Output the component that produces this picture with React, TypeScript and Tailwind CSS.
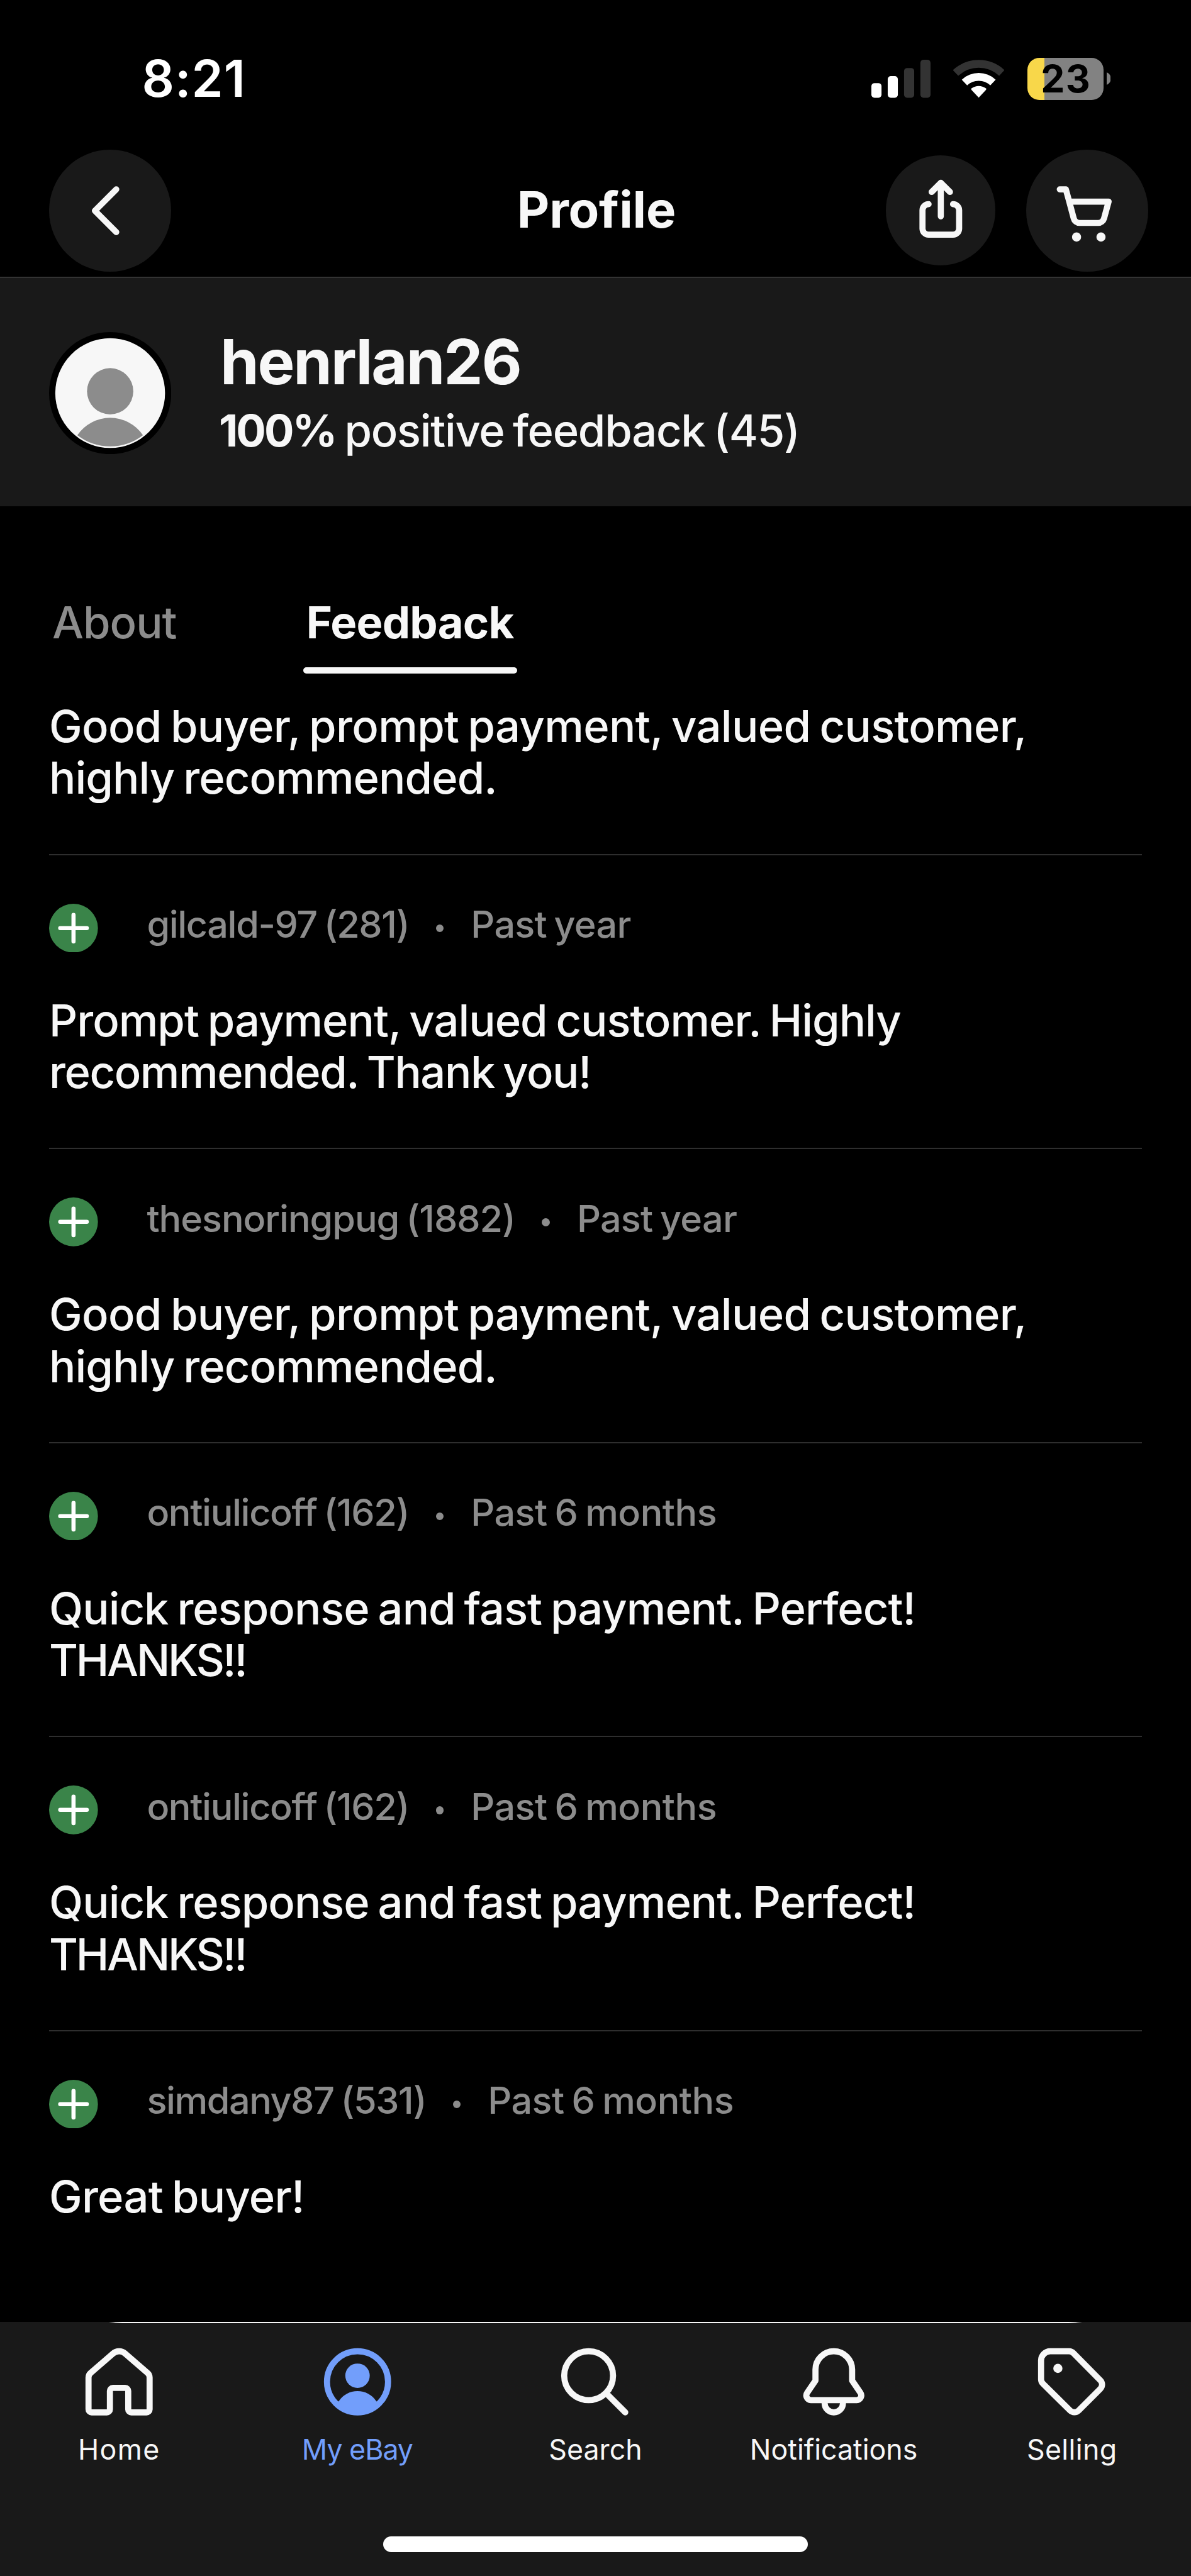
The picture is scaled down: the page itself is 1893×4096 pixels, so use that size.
import type { ReactNode } from "react";

type Line = { text: string; tracking: string };
type Feedback = {
  user: Line;
  period: Line;
  lines: Line[];
};

const goodBuyer: Line[] = [
  { text: "Good buyer, prompt payment, valued customer,", tracking: "tracking-[-0.67px]" },
  { text: "highly recommended.", tracking: "tracking-[-0.93px]" },
];

const quickResponse: Line[] = [
  { text: "Quick response and fast payment. Perfect!", tracking: "tracking-[-0.98px]" },
  { text: "THANKS!!", tracking: "tracking-[-3.2px]" },
];

const pastYear: Line = { text: "Past year", tracking: "tracking-[-0.73px]" };
const pastSixMonths: Line = { text: "Past 6 months", tracking: "tracking-[-0.5px]" };

const entries: Feedback[] = [
  {
    user: { text: "gilcald-97 (281)", tracking: "tracking-[-1.38px]" },
    period: pastYear,
    lines: [
      { text: "Prompt payment, valued customer. Highly", tracking: "tracking-[-1px]" },
      { text: "recommended. Thank you!", tracking: "tracking-[-1.45px]" },
    ],
  },
  {
    user: { text: "thesnoringpug (1882)", tracking: "tracking-[-1.03px]" },
    period: pastYear,
    lines: goodBuyer,
  },
  {
    user: { text: "ontiulicoff (162)", tracking: "tracking-[-1.33px]" },
    period: pastSixMonths,
    lines: quickResponse,
  },
  {
    user: { text: "ontiulicoff (162)", tracking: "tracking-[-1.33px]" },
    period: pastSixMonths,
    lines: quickResponse,
  },
  {
    user: { text: "simdany87 (531)", tracking: "tracking-[-1.4px]" },
    period: pastSixMonths,
    lines: [{ text: "Great buyer!", tracking: "tracking-[-0.77px]" }],
  },
];

function StatusBar() {
  return (
    <div className="flex h-[237.6px] items-center pt-[13.4px] pl-[225.4px] text-white">
      <span className="w-[1159.6px] text-[80.5px] leading-[96px] font-semibold tracking-[1px]">8:21</span>
      <svg className="h-[60.5px] w-[94px] shrink-0" viewBox="44 80 286 184" preserveAspectRatio="none">
        <rect x="44" y="193" width="49" height="71" rx="15" fill="#fff" />
        <rect x="123" y="159" width="49" height="105" rx="15" fill="#fff" />
        <rect x="202" y="120" width="49" height="144" rx="15" fill="#333" />
        <rect x="281" y="80" width="49" height="184" rx="15" fill="#333" />
      </svg>
      <svg className="ml-[36.1px] h-[60.5px] w-[81.2px] shrink-0" viewBox="440 80 247 184" fill="none">
        <path d="M451.7 144a164 164 0 0 1 223.6 0" stroke="#333" strokeWidth="38" />
        <path d="M494.6 190.1a101 101 0 0 1 137.8 0" stroke="#fff" strokeWidth="38" />
        <path d="M563.5 263 528 225.5q-3-4 2-8a57 57 0 0 1 67 0q5 4 2 8z" fill="#fff" />
      </svg>
      <div className="ml-[36.4px] flex h-[66.4px] w-[121.3px] shrink-0 items-center justify-center rounded-[19px] bg-[linear-gradient(to_right,#f8d74a_27.4px,#828282_27.4px)] text-[60.5px] leading-[66px] font-bold text-black">
        <span className="pl-[2px] tracking-[1.5px]">23</span>
      </div>
      <svg className="ml-[4.9px] h-[20px] w-[6.6px] shrink-0" viewBox="0 0 20 61" preserveAspectRatio="none">
        <path d="M0 0q20 9 20 30.5T0 61z" fill="#828282" />
      </svg>
    </div>
  );
}

function NavigationBar() {
  return (
    <div className="grid h-[194.2px] grid-cols-[1fr_auto_1fr] items-center text-[#f7f7f7]">
      <div className="pl-[77.7px]">
        <button className="flex size-[194.2px] rounded-full bg-[#191919]">
          <svg className="size-full" viewBox="0 0 40 40" fill="none" stroke="currentColor" strokeWidth="2" strokeLinecap="round" strokeLinejoin="round">
            <path d="m22 13-7 7 7 7" />
          </svg>
        </button>
      </div>
      <h1 className="pb-[3px] pl-[3px] text-[79.6px] leading-[96px] font-bold tracking-[-0.2px]">Profile</h1>
      <div className="flex items-center justify-end gap-[48.6px] pr-[68px]">
        <button className="flex size-[174.7px] rounded-full bg-[#191919]">
          <svg className="size-full" viewBox="0 0 36 36" fill="none" stroke="currentColor" strokeWidth="2" strokeLinecap="round" strokeLinejoin="round">
            <path d="M18 20V9.2M15 12l3-3 3 3" />
            <path d="M14 16a2 2 0 0 0-2 2v6a2 2 0 0 0 2 2h8a2 2 0 0 0 2-2v-6a2 2 0 0 0-2-2" />
          </svg>
        </button>
        <button className="flex size-[194.2px] rounded-full bg-[#191919]">
          <svg className="size-full" viewBox="0 0 40 40" fill="none" stroke="currentColor" strokeWidth="2" strokeLinecap="round" strokeLinejoin="round">
            <path d="M11 13h2l1.1 4H27l-1.5 5.5a2 2 0 0 1-1.95 1.5H17.5a2 2 0 0 1-1.93-1.5L14.1 17" />
            <circle cx="16.5" cy="28.6" r="1.5" fill="currentColor" stroke="none" />
            <circle cx="24.5" cy="28.6" r="1.5" fill="currentColor" stroke="none" />
          </svg>
        </button>
      </div>
    </div>
  );
}

function Avatar() {
  return (
    <svg className="size-[194.2px] shrink-0" viewBox="-98.5 -98.5 197 197">
      <circle r="98.5" fill="#000" />
      <circle r="88.5" fill="#f7f7f7" />
      <circle cy="-3" r="37.3" fill="#8c8c8c" />
      <path d="M-52.9 67.8a64 64 0 0 1 105.8 0A86 86 0 0 1-52.9 67.8z" fill="#8c8c8c" />
    </svg>
  );
}

function ProfileHeader() {
  return (
    <section className="flex h-[365.3px] border-t-2 border-[#333] bg-[#191919] pl-[77.7px] text-[#f7f7f7]">
      <div className="pt-[86px]">
        <Avatar />
      </div>
      <div className="pt-[78.6px] pl-[78px]">
        <h2 className="text-[99px] leading-[110px] font-bold tracking-[-2.1px]">henrlan26</h2>
        <p className="mt-[13.4px] -ml-[2px] flex text-[70.5px] leading-[82.5px]">
          <span className="w-[199.5px] font-bold tracking-[-2.9px]">100%</span>
          <span className="font-medium tracking-[-1.27px] [word-spacing:-4px]">positive feedback (45)</span>
        </p>
      </div>
    </section>
  );
}

function Tabs() {
  return (
    <nav className="flex pt-[144.3px] pl-[83px] text-[70.5px] leading-[82.5px]">
      <div className="w-[399.4px] font-medium tracking-[-1px] text-[#8c8c8c]">About</div>
      <div className="w-[340px] text-[#f7f7f7]">
        <div className="pl-[4.4px] font-bold tracking-[-0.8px]">Feedback</div>
        <div className="mt-[29.1px] h-[10.5px] rounded-full bg-[#f7f7f7]" />
      </div>
    </nav>
  );
}

function Comment({ lines }: { lines: Line[] }) {
  return (
    <p className="text-[70.5px] leading-[82.5px] font-medium whitespace-nowrap text-[#f7f7f7] [word-spacing:-4px]">
      {lines.map((line) => (
        <span key={line.text} className={`block ${line.tracking}`}>
          {line.text}
        </span>
      ))}
    </p>
  );
}

function PositiveIcon() {
  return (
    <svg className="mt-[5.3px] size-[77.7px] shrink-0" viewBox="0 0 16 16">
      <circle cx="8" cy="8" r="8" fill="#3a8449" />
      <path d="M8 3.65v8.7M3.65 8h8.7" stroke="#fff" strokeWidth="1.35" strokeLinecap="round" />
    </svg>
  );
}

function Entry({ user, period, lines }: Feedback) {
  return (
    <article className="h-[467.5px] shrink-0 border-t-2 border-[#2e2e2e] pt-[71.7px]">
      <div className="flex h-[81px] items-start">
        <PositiveIcon />
        <div className="ml-[77.7px] flex text-[59.3px] leading-[77.7px] font-medium whitespace-nowrap text-[#8c8c8c] [word-spacing:-3.5px]">
          <span className={user.tracking}>{user.text}</span>
          <i className="mr-[43px] ml-[42.5px] mt-[38.7px] size-[12.5px] rounded-full bg-[#8c8c8c]" />
          <span className={period.tracking}>{period.text}</span>
        </div>
      </div>
      <div className="mt-[69.5px]">
        <Comment lines={lines} />
      </div>
    </article>
  );
}

function TabItem({ label, tracking, active = false, children }: { label: string; tracking: string; active?: boolean; children: ReactNode }) {
  return (
    <div className={`flex flex-1 flex-col items-center ${active ? "text-[#729efb]" : "text-[#f7f7f7]"}`}>
      <svg className="size-[116.5px]" viewBox="0 0 24 24" fill="none" stroke="currentColor" strokeWidth="2" strokeLinecap="round" strokeLinejoin="round">
        {children}
      </svg>
      <span className={`mt-[21.1px] text-[44.7px] leading-[58px] ${tracking}`}>{label}</span>
    </div>
  );
}

function TabBar() {
  return (
    <footer className="h-[404.3px] shrink-0 bg-[#191919]">
      <div className="h-[2.5px] overflow-hidden px-[77.7px]">
        <div className="h-[233px] rounded-full border-4 border-[#f7f7f7]" />
      </div>
      <div className="flex pt-[34.7px]">
        <TabItem label="Home" tracking="tracking-[1.3px]">
          <path d="M2 10.6a2 2 0 0 1 .68-1.5L10 2.75a3 3 0 0 1 4 0l7.32 6.35a2 2 0 0 1 .68 1.5V21a1 1 0 0 1-1 1h-5a1 1 0 0 1-1-1v-6a1 1 0 0 0-1-1h-4a1 1 0 0 0-1 1v6a1 1 0 0 1-1 1H3a1 1 0 0 1-1-1z" />
        </TabItem>
        <TabItem label="My eBay" tracking="tracking-[-1px]" active>
          <circle cx="12" cy="12" r="10" />
          <circle cx="12" cy="10" r="4" fill="currentColor" stroke="none" />
          <path d="M5.87 18.35a7.3 7.3 0 0 1 12.26 0l1.37 1.15a10.6 10.6 0 0 1-15 0z" fill="currentColor" stroke="none" />
        </TabItem>
        <TabItem label="Search" tracking="tracking-[0px]">
          <circle cx="9.8" cy="10" r="8" />
          <path d="m15.8 16 6 6" />
        </TabItem>
        <TabItem label="Notifications" tracking="tracking-[0px]">
          <path d="M12 2a6 6 0 0 0-6 6v3.6l-2.73 4A1.54 1.54 0 0 0 4.5 18h15a1.54 1.54 0 0 0 1.23-2.4L18 11.6V8a6 6 0 0 0-6-6z" />
          <path d="M9 19a3 3 0 0 0 6 0" />
        </TabItem>
        <TabItem label="Selling" tracking="tracking-[0.35px]">
          <path d="M5 2h6.2a2 2 0 0 1 1.4.6l8.8 8.9a2 2 0 0 1 0 2.8l-7.1 7.1a2 2 0 0 1-2.8 0L2.6 12.6A2 2 0 0 1 2 11.2V5a3 3 0 0 1 3-3z" />
          <circle cx="7.5" cy="7.6" r="1.5" fill="currentColor" stroke="none" />
        </TabItem>
      </div>
      <div className="mx-auto mt-[108.9px] h-[24.3px] w-[674.4px] rounded-full bg-white" />
    </footer>
  );
}

export default function App() {
  return (
    <div className="flex h-[4096px] w-[1893px] flex-col overflow-hidden bg-black font-['Inter','Liberation_Sans',sans-serif]">
      <header className="h-[439.7px] shrink-0">
        <StatusBar />
        <NavigationBar />
      </header>
      <ProfileHeader />
      <Tabs />
      <main className="min-h-0 flex-1 overflow-hidden px-[78px] pt-[42.6px]">
        <div className="h-[243.6px]">
          <Comment lines={goodBuyer} />
        </div>
        {entries.map((entry, index) => (
          <Entry key={index} {...entry} />
        ))}
      </main>
      <TabBar />
    </div>
  );
}
